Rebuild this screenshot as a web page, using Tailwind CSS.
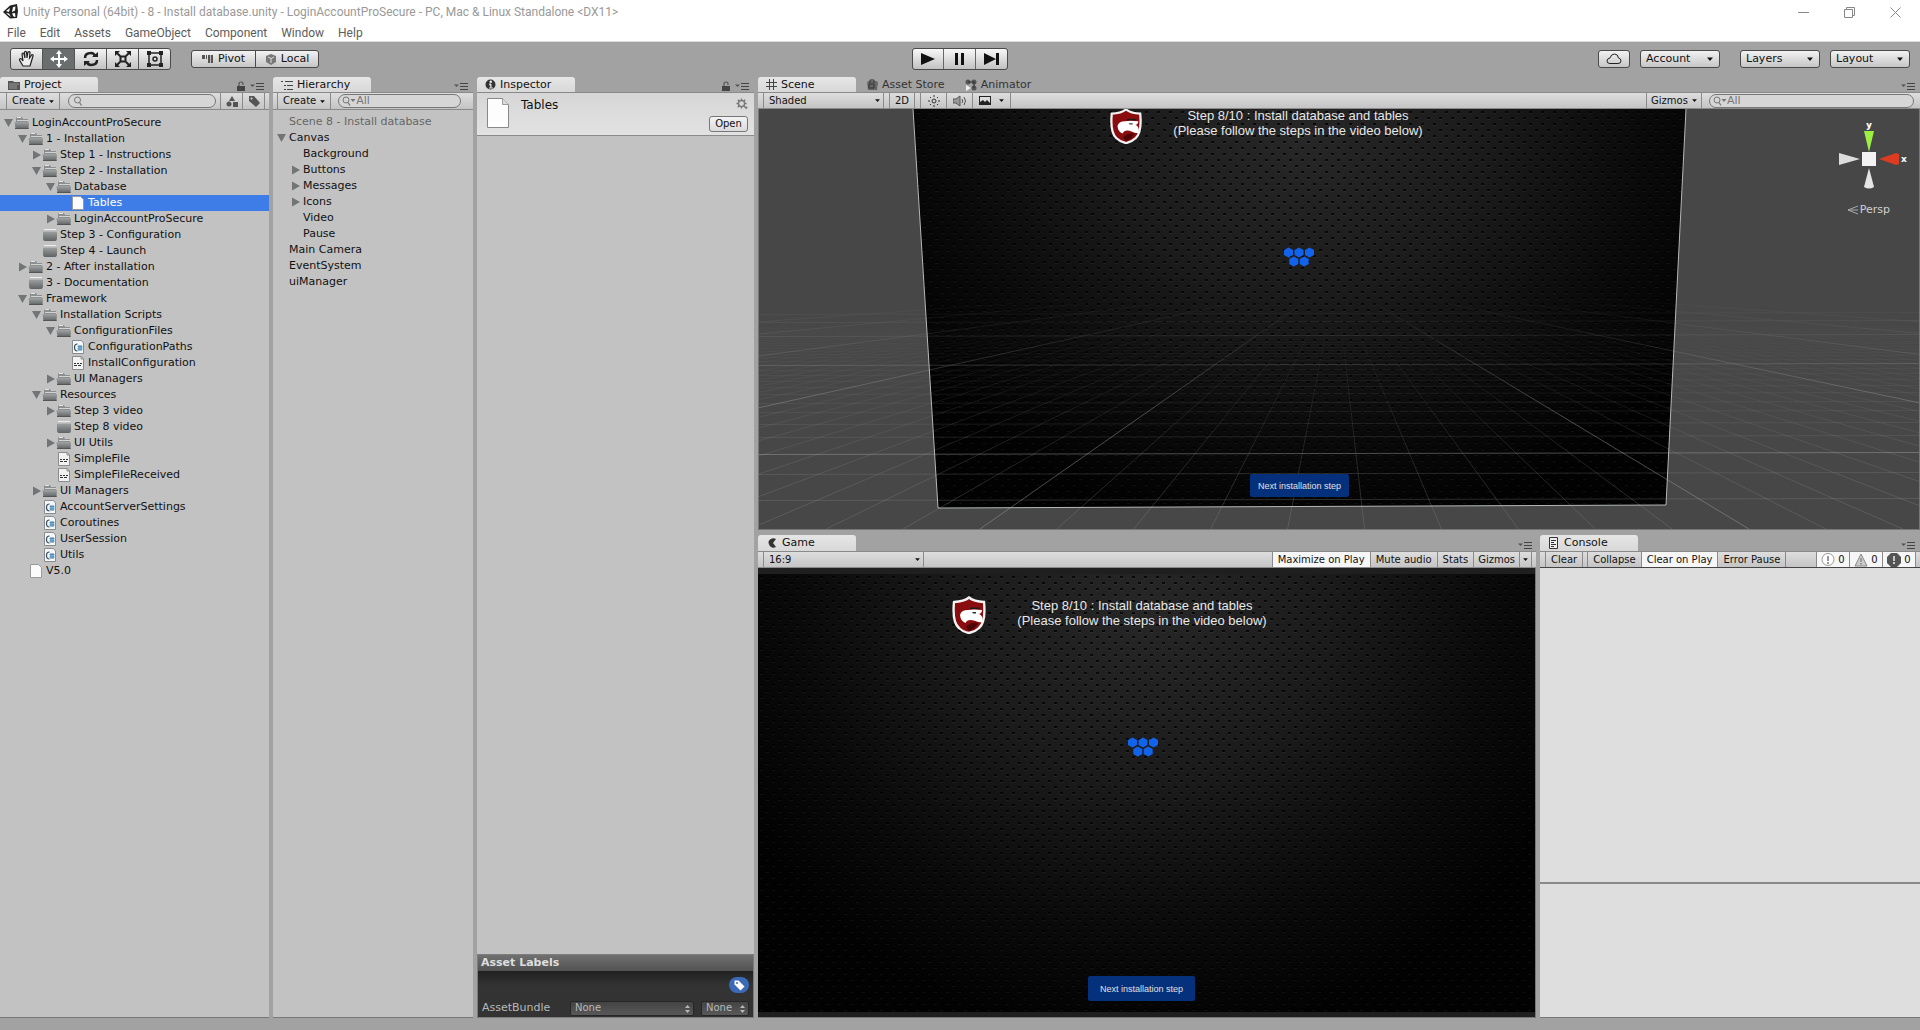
<!DOCTYPE html>
<html lang="en">
<head>
<meta charset="utf-8">
<title>Unity Personal (64bit) - 8 - Install database.unity</title>
<script src="https://cdn.jsdelivr.net/npm/@tailwindcss/browser@4"></script>
</head>
<body class="flex h-screen flex-col overflow-hidden bg-[#a2a2a2] font-['DejaVu_Sans',sans-serif] text-[11px] leading-4 text-[#111]">

<!-- Icon sheet -->
<svg class="absolute size-0" aria-hidden="true">
  <defs>
    <linearGradient id="fg" x1="0" y1="0" x2="0" y2="1"><stop offset="0" stop-color="#a0a4a4"/><stop offset="1" stop-color="#5e6262"/></linearGradient>
    <radialGradient id="glow" cx=".5" cy=".05" r=".62" gradientTransform="translate(.5 0) scale(.95 1.6) translate(-.5 0)"><stop offset="0" stop-color="#272727"/><stop offset=".4" stop-color="#1b1b1b"/><stop offset=".75" stop-color="#0a0a0a"/><stop offset="1" stop-color="#020202"/></radialGradient>
    <pattern id="dots" width="12" height="12" patternUnits="userSpaceOnUse"><path d="M2 2h3v2H2zM8 8h3v2H8z" fill="#000" fill-opacity=".75"/><path d="M2 4h3v1H2zM8 10h3v1H8z" fill="#fff" fill-opacity=".05"/></pattern>
    <linearGradient id="fadeMajor" gradientUnits="userSpaceOnUse" x1="0" y1="185" x2="0" y2="310"><stop offset="0" stop-color="#000"/><stop offset="1" stop-color="#fff"/></linearGradient>
    <linearGradient id="fadeMinor" gradientUnits="userSpaceOnUse" x1="0" y1="205" x2="0" y2="390"><stop offset="0" stop-color="#000"/><stop offset="1" stop-color="#fff"/></linearGradient>
    <mask id="mMajor" maskUnits="userSpaceOnUse" x="0" y="0" width="1160" height="420"><path d="M0 0h1160v420H0z" fill="url(#fadeMajor)"/></mask>
    <mask id="mMinor" maskUnits="userSpaceOnUse" x="0" y="0" width="1160" height="420"><path d="M0 0h1160v420H0z" fill="url(#fadeMinor)"/></mask>
  </defs>
  <symbol id="down" viewBox="0 0 10 10"><path d="M0 1h9L4.500 9z" fill="#717575"/></symbol>
  <symbol id="right" viewBox="0 0 10 10"><path d="M1 .5v9L9 5z" fill="#717575"/></symbol>
  <symbol id="folder" viewBox="0 0 16 16"><path d="M2 5V3l1-1h5l1 2h5v3H2z" fill="#8b8f8f"/><path d="M3 2.500h4" stroke="#e4e4e4"/><path d="M3 5.500h11" stroke="#d2d4d4"/><path d="M.5 7H15l-.5 7h-13z" fill="url(#fg)"/><path d="M1 13.500h13.500" stroke="#555"/></symbol>
  <symbol id="box" viewBox="0 0 16 16"><path d="M2 2.500h12" stroke="#eee"/><path d="M1 4h14v7q0 3-2 3H3q-2 0-2-3z" fill="url(#fg)"/><path d="M1 4.500h14" stroke="#b4b7b7"/></symbol>
  <symbol id="page" viewBox="0 0 16 16"><path d="M2.500 1.500h8l3 3v10h-11z" fill="#fbfbfb" stroke="#9a9a9a"/></symbol>
  <symbol id="text" viewBox="0 0 16 16"><path d="M2.500 1.500h9l2 2.500v10.500h-11z" fill="#f2f2f2" stroke="#8a8d8d"/><path d="M11 1.500V4h2.500" fill="none" stroke="#8a8d8d"/><path d="M4 8.500h2m1 0h2m1 0h2M4 10.500h3m1 0h3" stroke="#333"/></symbol>
  <symbol id="cs" viewBox="0 0 16 16"><path d="M2.500 1.500h9l2 2.500v10.500h-11z" fill="#f4f7f9" stroke="#8a8d8d"/><path d="M7.500 5Q4.500 5 4.500 8.500T7.500 12" fill="none" stroke="#3b4a55" stroke-width="1.200"/><path d="M9 6v6m2-6v6M7.500 7.800h5M7.500 10h5" stroke="#2476a8" stroke-width=".9"/></symbol>
  <symbol id="menu" viewBox="0 0 15 9"><path d="M0 2.500h5L2.500 5z" fill="#555"/><path d="M6 1.500h8M6 4.500h8M6 7.500h8" stroke="#444"/></symbol>
  <symbol id="lock" viewBox="0 0 10 11"><path d="M1 5h8v5H1z" fill="#444"/><path d="M3 5V3q0-2 2-2t2 2v1" fill="none" stroke="#555" stroke-width="1.200"/></symbol>
  <symbol id="caret" viewBox="0 0 8 5"><path d="M0 .5h8L4 5z" fill="currentColor"/></symbol>
  <symbol id="mag" viewBox="0 0 14 10"><circle cx="4.500" cy="4" r="3" fill="none" stroke="#777"/><path d="M6.500 6.500l2 3" stroke="#777" stroke-width="1.300"/></symbol>
  <symbol id="magv" viewBox="0 0 14 10"><circle cx="4" cy="4" r="3" fill="none" stroke="#777"/><path d="M6 6.500l2 3" stroke="#777" stroke-width="1.300"/><path d="M8.500 3h5L11 6z" fill="#777"/></symbol>
  <symbol id="shield" viewBox="0 0 34 38"><path d="M17 1.500Q22 5.500 32 6q2 20-5 26-4 4-10 5Q11 36 7 32 0 26 2 6 12 5.500 17 1.500z" fill="#8b0c0e" stroke="#f4f4f4" stroke-width="2.400"/><path d="M8 19q1-5 8-5 5-1 14 0 0 3-3 4 4 1 3.500 8-3 1-7-1-8-3-10 2-5-2-5.500-8z" fill="#fff"/><path d="M18 11.500h10v1.500H18z" fill="#1c1c1c"/><path d="M20 16h4v1.500h-3z" fill="#333"/><path d="M14 31q4-5 12-4-3 6-9 8z" fill="#4b0505"/></symbol>
  <symbol id="hexes" viewBox="0 0 32 20"><path d="M1 3l4.500-2.500L10 3v5l-4.500 2.500L1 8zM11.500 3L16 .5 20.500 3v5L16 10.500 11.500 8zM22 3l4.500-2.500L31 3v5l-4.500 2.500L22 8zM6.300 12l4.500-2.500 4.500 2.500v5l-4.500 2.500L6.300 17zM16.700 12l4.500-2.500 4.500 2.500v5l-4.500 2.500-4.500-2.500z" fill="#1263ec"/></symbol>
</svg>

<header class="shrink-0 border-b border-[#dcdcdc] bg-white text-[12px]">
  <div class="flex h-6 items-center pl-[3px]">
    <svg class="size-4" viewBox="0 0 16 16"><path d="M0 8l7-6.500L14 0l1 7-1 7-7 .5z" fill="#222"/><path d="M3 7l4-3-1 4zM3 9l3 .5L8 13zM10 3l2.500-.5L12 6.500 9 8zM9 9.500l3-.5.5 4-2-.500z" fill="#fff"/></svg>
    <h1 class="ml-1 flex-1 font-[Roboto,sans-serif] whitespace-nowrap text-[#999]">Unity Personal (64bit) - 8 - Install database.unity - LoginAccountProSecure - PC, Mac &amp; Linux Standalone &lt;DX11&gt;</h1>
    <div class="flex gap-[35px] pr-[19px]">
      <button aria-label="Minimize"><svg class="size-[11px]" viewBox="0 0 11 11"><path d="M0 5.500h11" stroke="#888"/></svg></button>
      <button aria-label="Restore"><svg class="size-[11px]" viewBox="0 0 11 11" fill="none" stroke="#888"><path d="M.5 2.500h8v8h-8zM2.500 2.500v-2h8v8h-2"/></svg></button>
      <button aria-label="Close"><svg class="size-[11px]" viewBox="0 0 11 11"><path d="M.5.5l10 10m0-10l-10 10" stroke="#888"/></svg></button>
    </div>
  </div>
  <nav class="flex h-[17px] items-center gap-[14px] pl-[7px] font-[Roboto,sans-serif] text-[#5c5c5c]">
    <a href="#">File</a><a href="#">Edit</a><a href="#">Assets</a><a href="#">GameObject</a><a href="#">Component</a><a href="#">Window</a><a href="#">Help</a>
  </nav>
</header>

<!-- Main toolbar -->
<div class="grid h-[35px] shrink-0 grid-cols-[1fr_auto_1fr] items-center pb-[2px]">
  <div class="flex items-center gap-5 pl-2.5">
    <div class="flex h-[22px] divide-x divide-[#555] overflow-hidden rounded-[3px] border border-[#4a4a4a] bg-linear-to-b from-[#f4f4f4] to-[#c2c2c2]">
      <button class="flex w-8 items-center justify-center" aria-label="Hand"><svg class="size-[18px]" viewBox="0 0 18 18"><path d="M5 16L1.500 10q0-2 2-1L5 11 4 4q1-2 2 0l1 4-.5-6q1-1.500 2 0L9 8l1-6q1.500-1 2 .5L11.500 8 14 4.500q1.500 0 1 1.500L13.500 11 12 16z" fill="#eee" stroke="#222" stroke-width="1.200"/></svg></button>
      <button class="flex w-8 items-center justify-center bg-[#6a6e6e]" aria-label="Move"><svg class="size-[18px]" viewBox="0 0 18 18"><path d="M9 0l3 4h-2v4h4V6l4 3-4 3v-2h-4v4h2l-3 4-3-4h2v-4H4v2L0 9l4-3v2h4V4H6z" fill="#fff"/></svg></button>
      <button class="flex w-8 items-center justify-center" aria-label="Rotate"><svg class="size-4" viewBox="0 0 16 16" fill="none" stroke="#222" stroke-width="2.500"><path d="M2 7q0-5 6-5 3 0 4 3M14 9q0 5-6 5-3 0-4-3"/><path d="M9 6h6V1zM7 10H1v5z" fill="#222" stroke="none"/></svg></button>
      <button class="flex w-8 items-center justify-center" aria-label="Scale"><svg class="size-4" viewBox="0 0 16 16" fill="none" stroke="#222" stroke-width="2"><path d="M5.500 5.500h5v5h-5zM5 5L1 1m10 4l4-4M5 11l-4 4m10-4l4 4"/><path d="M0 0h5L0 5zM16 0h-5l5 5zM0 16h5l-5-5zM16 16h-5l5-5z" fill="#222" stroke="none"/></svg></button>
      <button class="flex w-[31px] items-center justify-center" aria-label="Rect"><svg class="size-[18px]" viewBox="0 0 18 18" fill="none" stroke="#222" stroke-width="1.500"><path d="M3 3h12v12H3z"/><circle cx="9" cy="9" r="2"/><path d="M1 1h4v4H1zM13 1h4v4h-4zM1 13h4v4H1zM13 13h4v4h-4z" fill="#222" stroke="none"/></svg></button>
    </div>
    <div class="flex h-[18px] divide-x divide-[#4a4a4a] overflow-hidden rounded-[3px] border border-[#4a4a4a] bg-linear-to-b from-[#f2f2f2] to-[#c6c6c6]">
      <button class="flex w-[64px] items-center justify-center gap-1"><svg class="h-2.5 w-3" viewBox="0 0 12 10"><path d="M0 1h3v4H0zM4 1h1v4H4zM6 1h5v8H6z" fill="#555"/><path d="M8.500 1v8" stroke="#bbb"/></svg>Pivot</button>
      <button class="flex w-[62px] items-center justify-center gap-1"><svg class="size-3" viewBox="0 0 12 12"><path d="M1 3l5-2 5 2v6l-5 3-5-3z" fill="#777"/><path d="M3 4l3 1.500L9 4M6 5.500V10" stroke="#ddd" fill="none"/></svg>Local</button>
    </div>
  </div>
  <div class="flex h-[22px] divide-x divide-[#666] overflow-hidden rounded-[3px] border border-[#4a4a4a] bg-linear-to-b from-[#f8f8f8] to-[#c2c2c2]">
    <button class="flex w-[31px] items-center justify-center" aria-label="Play"><svg class="size-3.5" viewBox="0 0 14 14"><path d="M0 1l14 6-14 6z" fill="#111"/></svg></button>
    <button class="flex w-8 items-center justify-center" aria-label="Pause"><svg class="size-3.5" viewBox="0 0 14 14"><path d="M2 1h3v12H2zM8 1h3v12H8z" fill="#111"/></svg></button>
    <button class="flex w-[31px] items-center justify-center" aria-label="Step"><svg class="h-3.5 w-4" viewBox="0 0 16 14"><path d="M0 1l12 6-12 6zM12 1h3v12h-3z" fill="#111"/></svg></button>
  </div>
  <div class="flex items-center justify-end gap-2.5 pr-2.5">
    <button class="flex h-[18px] w-8 items-center justify-center rounded-[3px] border border-[#4a4a4a] bg-linear-to-b from-[#f2f2f2] to-[#c6c6c6]" aria-label="Cloud"><svg class="h-3 w-4" viewBox="0 0 16 12"><path d="M4 10.500q-3 0-3-2.500t3-3q1-4 4.500-4t4 4q2.500.5 2.500 3t-3 2.500z" fill="none" stroke="#222"/></svg></button>
    <label class="relative mr-2.5"><select aria-label="Account" class="block h-[18px] w-20 appearance-none rounded-[3px] border border-[#4a4a4a] bg-linear-to-b from-[#f2f2f2] to-[#c6c6c6] px-[5px]"><option>Account</option></select><svg class="absolute top-[7px] right-[7px] h-1 w-1.5"><use href="#caret"/></svg></label>
    <label class="relative"><select aria-label="Layers" class="block h-[18px] w-20 appearance-none rounded-[3px] border border-[#4a4a4a] bg-linear-to-b from-[#f2f2f2] to-[#c6c6c6] px-[5px]"><option>Layers</option></select><svg class="absolute top-[7px] right-[7px] h-1 w-1.5"><use href="#caret"/></svg></label>
    <label class="relative"><select aria-label="Layout" class="block h-[18px] w-20 appearance-none rounded-[3px] border border-[#4a4a4a] bg-linear-to-b from-[#f2f2f2] to-[#c6c6c6] px-[5px]"><option>Layout</option></select><svg class="absolute top-[7px] right-[7px] h-1 w-1.5"><use href="#caret"/></svg></label>
  </div>
</div>

<main class="flex min-h-0 flex-1 gap-1">

  <!-- Project -->
  <section class="flex w-[269px] shrink-0 flex-col">
    <div class="flex h-[15px] items-center">
      <h2 class="flex h-full w-[98px] items-center gap-1 rounded-t-[3px] bg-linear-to-b from-[#e6e6e6] to-[#d8d8d8] pl-2"><svg class="size-3" viewBox="0 0 12 12"><path d="M0 2h5l1 1h6v8H0z" fill="#555"/><path d="M1 5h10M2 6v4m2-4v4m2-4v4m2-4v4" stroke="#999"/></svg>Project</h2>
      <svg class="mt-1 ml-auto h-[11px] w-2.5"><use href="#lock"/></svg>
      <svg class="mt-1 mr-1 ml-1 h-[9px] w-[15px]"><use href="#menu"/></svg>
    </div>
    <div class="flex h-[18px] items-center border-y border-[#8a8a8a] bg-linear-to-b from-[#dedede] to-[#c4c4c4] pl-1.5 text-[10px]">
      <button class="flex h-full items-center gap-1 border-x border-[#8a8a8a] px-[5px]">Create<svg class="h-[3px] w-[5px]"><use href="#caret"/></svg></button>
      <label class="ml-2 flex h-[14px] flex-1 items-center rounded-full border border-[#777] bg-[#d6d6d6] pl-1"><svg class="h-2.5 w-3.5"><use href="#mag"/></svg><input aria-label="Search project" class="w-0 flex-1 outline-none"></label>
      <button class="ml-1 flex h-full w-[22px] items-center justify-center border-l border-[#8a8a8a]" aria-label="Filter by type"><svg class="size-3" viewBox="0 0 12 12"><path d="M6 1l3 5H3zM7 7h5v5H7z" fill="#555"/><circle cx="3" cy="9" r="2.500" fill="#555"/></svg></button>
      <button class="mr-1 flex h-full w-[23px] items-center justify-center border-x border-[#8a8a8a]" aria-label="Filter by label"><svg class="size-3" viewBox="0 0 12 12"><path d="M1 1h5l6 7-4 4-7-6z" fill="#555"/><circle cx="3.500" cy="3.500" r="1" fill="#ddd"/></svg></button>
    </div>
    <ul class="flex-1 border-b border-[#777] bg-[#c2c2c2] pt-[5px] whitespace-nowrap">
      <li class="flex h-4 items-center pl-1"><svg class="size-2.5"><use href="#down"/></svg><svg class="mr-0.5 size-4"><use href="#folder"/></svg>LoginAccountProSecure</li>
      <li class="flex h-4 items-center pl-[18px]"><svg class="size-2.5"><use href="#down"/></svg><svg class="mr-0.5 size-4"><use href="#folder"/></svg>1 - Installation</li>
      <li class="flex h-4 items-center pl-8"><svg class="size-2.5"><use href="#right"/></svg><svg class="mr-0.5 size-4"><use href="#folder"/></svg>Step 1 - Instructions</li>
      <li class="flex h-4 items-center pl-8"><svg class="size-2.5"><use href="#down"/></svg><svg class="mr-0.5 size-4"><use href="#folder"/></svg>Step 2 - Installation</li>
      <li class="flex h-4 items-center pl-[46px]"><svg class="size-2.5"><use href="#down"/></svg><svg class="mr-0.5 size-4"><use href="#folder"/></svg>Database</li>
      <li class="flex h-4 items-center bg-[#3e7de7] pl-[70px] text-white"><svg class="mr-0.5 size-4"><use href="#page"/></svg>Tables</li>
      <li class="flex h-4 items-center pl-[46px]"><svg class="size-2.5"><use href="#right"/></svg><svg class="mr-0.5 size-4"><use href="#folder"/></svg>LoginAccountProSecure</li>
      <li class="flex h-4 items-center pl-[42px]"><svg class="mr-0.5 size-4"><use href="#box"/></svg>Step 3 - Configuration</li>
      <li class="flex h-4 items-center pl-[42px]"><svg class="mr-0.5 size-4"><use href="#box"/></svg>Step 4 - Launch</li>
      <li class="flex h-4 items-center pl-[18px]"><svg class="size-2.5"><use href="#right"/></svg><svg class="mr-0.5 size-4"><use href="#folder"/></svg>2 - After installation</li>
      <li class="flex h-4 items-center pl-7"><svg class="mr-0.5 size-4"><use href="#box"/></svg>3 - Documentation</li>
      <li class="flex h-4 items-center pl-[18px]"><svg class="size-2.5"><use href="#down"/></svg><svg class="mr-0.5 size-4"><use href="#folder"/></svg>Framework</li>
      <li class="flex h-4 items-center pl-8"><svg class="size-2.5"><use href="#down"/></svg><svg class="mr-0.5 size-4"><use href="#folder"/></svg>Installation Scripts</li>
      <li class="flex h-4 items-center pl-[46px]"><svg class="size-2.5"><use href="#down"/></svg><svg class="mr-0.5 size-4"><use href="#folder"/></svg>ConfigurationFiles</li>
      <li class="flex h-4 items-center pl-[70px]"><svg class="mr-0.5 size-4"><use href="#cs"/></svg>ConfigurationPaths</li>
      <li class="flex h-4 items-center pl-[70px]"><svg class="mr-0.5 size-4"><use href="#text"/></svg>InstallConfiguration</li>
      <li class="flex h-4 items-center pl-[46px]"><svg class="size-2.5"><use href="#right"/></svg><svg class="mr-0.5 size-4"><use href="#folder"/></svg>UI Managers</li>
      <li class="flex h-4 items-center pl-8"><svg class="size-2.5"><use href="#down"/></svg><svg class="mr-0.5 size-4"><use href="#folder"/></svg>Resources</li>
      <li class="flex h-4 items-center pl-[46px]"><svg class="size-2.5"><use href="#right"/></svg><svg class="mr-0.5 size-4"><use href="#folder"/></svg>Step 3 video</li>
      <li class="flex h-4 items-center pl-14"><svg class="mr-0.5 size-4"><use href="#box"/></svg>Step 8 video</li>
      <li class="flex h-4 items-center pl-[46px]"><svg class="size-2.5"><use href="#right"/></svg><svg class="mr-0.5 size-4"><use href="#folder"/></svg>UI Utils</li>
      <li class="flex h-4 items-center pl-14"><svg class="mr-0.5 size-4"><use href="#text"/></svg>SimpleFile</li>
      <li class="flex h-4 items-center pl-14"><svg class="mr-0.5 size-4"><use href="#text"/></svg>SimpleFileReceived</li>
      <li class="flex h-4 items-center pl-8"><svg class="size-2.5"><use href="#right"/></svg><svg class="mr-0.5 size-4"><use href="#folder"/></svg>UI Managers</li>
      <li class="flex h-4 items-center pl-[42px]"><svg class="mr-0.5 size-4"><use href="#cs"/></svg>AccountServerSettings</li>
      <li class="flex h-4 items-center pl-[42px]"><svg class="mr-0.5 size-4"><use href="#cs"/></svg>Coroutines</li>
      <li class="flex h-4 items-center pl-[42px]"><svg class="mr-0.5 size-4"><use href="#cs"/></svg>UserSession</li>
      <li class="flex h-4 items-center pl-[42px]"><svg class="mr-0.5 size-4"><use href="#cs"/></svg>Utils</li>
      <li class="flex h-4 items-center pl-7"><svg class="mr-0.5 size-4"><use href="#page"/></svg>V5.0</li>
    </ul>
  </section>

  <!-- Hierarchy -->
  <section class="flex w-[200px] shrink-0 flex-col">
    <div class="flex h-[15px] items-center">
      <h2 class="flex h-full w-[98px] items-center gap-1 rounded-t-[3px] bg-linear-to-b from-[#e6e6e6] to-[#d8d8d8] pl-2"><svg class="h-2.5 w-3" viewBox="0 0 12 10"><path d="M0 1.500h2m2 0h8M3 5.500h2m1 0h6M3 9.500h2m1 0h6" stroke="#444"/></svg>Hierarchy</h2>
      <svg class="mt-1 mr-1 ml-auto h-[9px] w-[15px]"><use href="#menu"/></svg>
    </div>
    <div class="flex h-[18px] items-center border-y border-[#8a8a8a] bg-linear-to-b from-[#dedede] to-[#c4c4c4] pl-1 text-[10px]">
      <button class="flex h-full items-center gap-1 border-x border-[#8a8a8a] px-[5px]">Create<svg class="h-[3px] w-[5px]"><use href="#caret"/></svg></button>
      <label class="mr-3 ml-[7px] flex h-[14px] flex-1 items-center rounded-full border border-[#777] bg-[#d6d6d6] pl-[3px]"><svg class="h-2.5 w-3.5"><use href="#magv"/></svg><input aria-label="Search hierarchy" placeholder="All" class="w-0 flex-1 text-[11px] outline-none placeholder:text-[#777]"></label>
    </div>
    <ul class="flex-1 border-b border-[#777] bg-[#c2c2c2] pt-1 whitespace-nowrap">
      <li class="h-4 pl-4 text-[#666]">Scene 8 - Install database</li>
      <li class="flex h-4 items-center gap-0.5 pl-1"><svg class="size-2.5"><use href="#down"/></svg>Canvas</li>
      <li class="h-4 pl-[30px]">Background</li>
      <li class="flex h-4 items-center gap-0.5 pl-[18px]"><svg class="size-2.5"><use href="#right"/></svg>Buttons</li>
      <li class="flex h-4 items-center gap-0.5 pl-[18px]"><svg class="size-2.5"><use href="#right"/></svg>Messages</li>
      <li class="flex h-4 items-center gap-0.5 pl-[18px]"><svg class="size-2.5"><use href="#right"/></svg>Icons</li>
      <li class="h-4 pl-[30px]">Video</li>
      <li class="h-4 pl-[30px]">Pause</li>
      <li class="h-4 pl-4">Main Camera</li>
      <li class="h-4 pl-4">EventSystem</li>
      <li class="h-4 pl-4">uiManager</li>
    </ul>
  </section>

  <!-- Inspector -->
  <section class="flex w-[277px] shrink-0 flex-col">
    <div class="flex h-[15px] items-center">
      <h2 class="flex h-full w-[98px] items-center gap-1 rounded-t-[3px] bg-linear-to-b from-[#e6e6e6] to-[#d8d8d8] pl-2"><svg class="size-[11px]" viewBox="0 0 11 11"><circle cx="5.500" cy="5.500" r="5" fill="#333"/><path d="M4 5h2v4m-2 0h4M5 2h1.500v1.500H5z" stroke="#ddd" fill="#ddd"/></svg>Inspector</h2>
      <svg class="mt-1 ml-auto h-[11px] w-2.5"><use href="#lock"/></svg>
      <svg class="mt-1 mr-1 ml-1 h-[9px] w-[15px]"><use href="#menu"/></svg>
    </div>
    <div class="flex h-[44px] gap-3 border-y border-[#8a8a8a] bg-linear-to-b from-[#d6d6d6] to-[#e2e2e2] pt-[5px] pr-1.5 pl-2.5">
      <svg class="h-[30px] w-[22px]" viewBox="0 0 22 30"><path d="M.5.5h15l6 6v23H.5z" fill="#fdfdfd" stroke="#888"/><path d="M15.500.5v6h6" fill="#ddd" stroke="#999"/></svg>
      <h3 class="flex-1 text-[12px] leading-[14px]">Tables</h3>
      <div class="flex flex-col items-end gap-1.5">
        <button aria-label="Settings" class="h-3"><svg class="size-3" viewBox="0 0 13 12"><circle cx="6" cy="5.500" r="3.300" fill="none" stroke="#777" stroke-width="1.500"/><path d="M6 0v2m0 7v2M.5 5.500h2m7 0h2M2 1.500L3.500 3M8.500 8l1.500 1.500M10 1.500L8.500 3M3.500 8L2 9.500" stroke="#777" stroke-width="1.500"/><path d="M9 9h4l-2 3z" fill="#777"/></svg></button>
        <button class="h-4 w-[39px] rounded-[3px] border border-[#777] bg-linear-to-b from-[#f4f4f4] to-[#dadada] text-[10px] leading-[14px]">Open</button>
      </div>
    </div>
    <div class="flex-1 bg-[#c2c2c2]"></div>
    <div class="border border-[#7d7d7d]">
      <h3 class="h-[17px] border-b border-[#222] bg-linear-to-b from-[#707070] to-[#525252] pl-[3px] text-[11px] font-bold text-[#dedede]">Asset Labels</h3>
      <div class="flex h-[45px] flex-col justify-between bg-[#313131] bg-linear-to-b from-[#222] to-[#333] to-30% pt-[5px] pr-1 pb-px pl-1 text-[#b8b8b8]">
        <button aria-label="Labels" class="self-end"><svg class="h-4 w-5" viewBox="0 0 20 16"><rect width="20" height="16" rx="8" fill="#3a6ab8"/><path d="M5.500 3.500h4l6 6-4 4-6-6z" fill="#fff"/><circle cx="8" cy="6" r="1" fill="#3a6ab8"/></svg></button>
        <div class="flex items-center">
          <span class="w-[88px]">AssetBundle</span>
          <label class="relative flex-1"><select aria-label="Asset bundle" class="block h-[15px] w-full appearance-none rounded-[2px] border border-[#262626] bg-linear-to-b from-[#444] to-[#585858] px-1 text-[10px] leading-3"><option>None</option></select><svg class="absolute top-1 right-1 h-2 w-[5px]" viewBox="0 0 5 8"><path d="M0 3l2.500-3L5 3zM0 5h5L2.500 8z" fill="#b8b8b8"/></svg></label>
          <label class="relative ml-[7px]"><select aria-label="Variant" class="block h-[15px] w-[48px] appearance-none rounded-[2px] border border-[#262626] bg-linear-to-b from-[#444] to-[#585858] px-1 text-[10px] leading-3"><option>None</option></select><svg class="absolute top-1 right-1 h-2 w-[5px]" viewBox="0 0 5 8"><path d="M0 3l2.500-3L5 3zM0 5h5L2.500 8z" fill="#b8b8b8"/></svg></label>
        </div>
      </div>
    </div>
  </section>

  <div class="flex min-w-0 flex-1 flex-col gap-[5px]">

    <!-- Scene -->
    <section class="flex min-h-0 flex-[453] flex-col">
      <div class="flex h-[15px] items-center">
        <h2 class="flex h-full w-[98px] items-center gap-1 rounded-t-[3px] bg-linear-to-b from-[#e6e6e6] to-[#d8d8d8] pl-2"><svg class="size-[11px]" viewBox="0 0 11 11"><path d="M3.500 0v11m4-11v11M0 3.500h11m-11 4h11" stroke="#444"/></svg>Scene</h2>
        <a href="#" class="ml-[11px] flex items-center gap-1 text-[#333]"><svg class="size-[11px]" viewBox="0 0 11 11"><path d="M0 3l2-1h7l2 1-1 8H1z" fill="#666"/><path d="M3 4V1h4v3M2 5h5v4H2z" fill="none" stroke="#333"/></svg>Asset Store</a>
        <a href="#" class="ml-5 flex items-center gap-1 text-[#333]"><svg class="size-3" viewBox="0 0 12 12"><circle cx="3" cy="3" r="2.500" fill="#555"/><circle cx="9" cy="3" r="2.500" fill="#555"/><circle cx="9" cy="9" r="2.500" fill="#555"/><path d="M1 6l5 3-5 3z" fill="#eee"/><path d="M3 3h6v6" stroke="#333" fill="none"/></svg>Animator</a>
        <svg class="mt-1 mr-1 ml-auto h-[9px] w-[15px]"><use href="#menu"/></svg>
      </div>
      <div class="flex h-[17px] items-center border-y border-[#8a8a8a] bg-linear-to-b from-[#dedede] to-[#c4c4c4] pl-[5px] text-[10px]">
        <label class="relative h-full"><select aria-label="Draw mode" class="block h-full w-[121px] appearance-none border-x border-[#8a8a8a] px-[5px]"><option>Shaded</option></select><svg class="absolute top-1.5 right-1 h-[3px] w-[5px]"><use href="#caret"/></svg></label>
        <button class="ml-[5px] h-full w-[26px] border-x border-[#8a8a8a]">2D</button>
        <button class="ml-[5px] flex h-full w-[27px] items-center justify-center border-x border-[#8a8a8a]" aria-label="Lighting"><svg class="size-3" viewBox="0 0 12 12" fill="none" stroke="#333"><circle cx="6" cy="6" r="2"/><path d="M6 0v2m0 8v2M0 6h2m8 0h2M2 2l1 1m6 6l1 1M10 2L9 3M3 9l-1 1"/></svg></button>
        <button class="flex h-full w-[26px] items-center justify-center border-r border-[#8a8a8a]" aria-label="Audio"><svg class="h-3 w-3.5" viewBox="0 0 14 12"><path d="M0 4h3l4-3v10L3 8H0z" fill="#999" stroke="#555"/><path d="M9 4q1.500 2 0 4m2-6q3 4 0 8" fill="none" stroke="#555"/></svg></button>
        <button class="flex h-full w-[38px] items-center justify-center gap-2 border-r border-[#8a8a8a]" aria-label="Effects"><svg class="h-[9px] w-3" viewBox="0 0 12 9"><path d="M0 0h12v9H0z" fill="#222"/><path d="M1 1h10v6L8 4 6 6 4 4 1 6z" fill="#ddd"/></svg><svg class="h-[3px] w-[5px]"><use href="#caret"/></svg></button>
        <button class="ml-auto flex h-full w-14 items-center justify-center gap-1 border-x border-[#8a8a8a]">Gizmos<svg class="h-[3px] w-[5px]"><use href="#caret"/></svg></button>
        <label class="mr-1.5 ml-[7px] flex h-[14px] w-[205px] items-center rounded-full border border-[#777] bg-[#d6d6d6] pl-[3px]"><svg class="h-2.5 w-3.5"><use href="#magv"/></svg><input aria-label="Search scene" placeholder="All" class="w-0 flex-1 text-[11px] outline-none placeholder:text-[#777]"></label>
      </div>
      <div class="relative min-h-0 flex-1 overflow-hidden border-x border-b border-[#777] bg-[#474747]">
        <svg class="size-full" viewBox="0 0 1160 420" preserveAspectRatio="none">
          <path d="M154 0h773l-20 396-728 3z" fill="url(#glow)"/>
          <path d="M154 0h773l-20 396-728 3z" fill="url(#dots)"/>
          <g id="minor" stroke="#8c8c8c" stroke-opacity=".3" mask="url(#mMinor)"></g>
          <g id="major" stroke="#a4a4a4" stroke-opacity=".45" mask="url(#mMajor)"></g>
          <path d="M154 0l25 399 728-3L927 0" fill="none" stroke="#b4b8b8"/>
        </svg>
        <svg class="absolute -top-px left-[350px] h-9 w-[34px]"><use href="#shield"/></svg>
        <p class="absolute -top-px left-[539px] -translate-x-1/2 text-center font-['Liberation_Sans',sans-serif] text-[13px] leading-[15px] whitespace-nowrap text-[#e8e8e8]">Step 8/10 : Install database and tables<br>(Please follow the steps in the video below)</p>
        <svg class="absolute top-[138px] left-[524px] h-5 w-8"><use href="#hexes"/></svg>
        <button class="absolute top-[365px] left-[491px] h-[23px] w-[99px] rounded-[2px] bg-[#05307c] font-['Liberation_Sans',sans-serif] text-[9px] text-[#e0e0e0]">Next installation step</button>
        <svg class="absolute top-[14px] right-2.5 h-[74px] w-[70px]" viewBox="0 0 70 74"><path d="M25 8h10l-5 21z" fill="#9bf043"/><path d="M60 31l-3-1-17 6 17 6 3-1z" fill="#dd3c20"/><path d="M0 30l21 6-21 6z" fill="#ddd"/><path d="M30 45l-5 19q5 3 10 0z" fill="#e6e6e6"/><path d="M23 29h14v14H23z" fill="#f3f3f3"/><text x="30" y="5" text-anchor="middle" class="fill-white text-[10px] font-bold">y</text><text x="65" y="39" text-anchor="middle" class="fill-white text-[9px] font-bold">x</text></svg>
        <div class="absolute top-[93px] right-[29px] flex items-center gap-0.5 text-[#d0d0d0]"><svg class="h-2.5 w-[11px]" viewBox="0 0 11 10"><path d="M11 1L1 5l10 4M1 5h10" fill="none" stroke="#aaa"/></svg>Persp</div>
      </div>
    </section>

    <div class="flex min-h-0 flex-[483] gap-1">

      <!-- Game -->
      <section class="flex min-w-0 flex-1 flex-col">
        <div class="flex h-4 items-center">
          <h2 class="flex h-full w-[98px] items-center gap-1 rounded-t-[3px] bg-linear-to-b from-[#e6e6e6] to-[#d8d8d8] pl-2.5"><svg class="size-2.5" viewBox="0 0 10 10"><path d="M8 1Q6 0 4 .5 0 2 .5 5T4 9.500Q6 10 8 9L5 5z" fill="#333"/></svg>Game</h2>
          <svg class="mt-1 mr-[3px] ml-auto h-[9px] w-[15px]"><use href="#menu"/></svg>
        </div>
        <div class="flex h-[17px] items-center border-y border-[#8a8a8a] bg-linear-to-b from-[#dedede] to-[#c4c4c4] pl-[5px] text-[10px]">
          <label class="relative h-full"><select aria-label="Aspect" class="block h-full w-[161px] appearance-none border-x border-[#8a8a8a] px-[5px]"><option>16:9</option></select><svg class="absolute top-1.5 right-1 h-[3px] w-[5px]"><use href="#caret"/></svg></label>
          <button class="ml-auto h-full border-x border-[#8a8a8a] bg-[#f6f6f6] px-[5px]">Maximize on Play</button>
          <button class="h-full border-r border-[#8a8a8a] px-[5px]">Mute audio</button>
          <button class="h-full border-r border-[#8a8a8a] px-[5px]">Stats</button>
          <button class="h-full border-r border-[#8a8a8a] px-1">Gizmos</button>
          <button class="mr-1 flex h-full w-3 items-center justify-center border-r border-[#8a8a8a]" aria-label="Gizmo options"><svg class="h-[3px] w-[5px]"><use href="#caret"/></svg></button>
        </div>
        <div class="relative min-h-0 flex-1 overflow-hidden border-r border-b border-[#777] bg-[#1f1f1f] pt-1.5 pb-[5px]">
          <svg class="block size-full bg-black"><rect width="100%" height="100%" fill="url(#glow)"/><rect width="100%" height="100%" fill="url(#dots)"/></svg>
          <svg class="absolute top-7 left-1/4 h-[38px] w-[34px]"><use href="#shield"/></svg>
          <p class="absolute top-[30px] left-[384px] -translate-x-1/2 text-center font-['Liberation_Sans',sans-serif] text-[13px] leading-[15px] whitespace-nowrap text-[#e8e8e8]">Step 8/10 : Install database and tables<br>(Please follow the steps in the video below)</p>
          <svg class="absolute top-[169px] left-[369px] h-5 w-8"><use href="#hexes"/></svg>
          <button class="absolute bottom-4 left-[330px] h-[25px] w-[107px] rounded-[2px] bg-[#05307c] font-['Liberation_Sans',sans-serif] text-[9px] text-[#e0e0e0]">Next installation step</button>
        </div>
      </section>

      <!-- Console -->
      <section class="flex w-[380px] shrink-0 flex-col">
        <div class="flex h-4 items-center">
          <h2 class="flex h-full w-[98px] items-center gap-1 rounded-t-[3px] bg-linear-to-b from-[#e6e6e6] to-[#d8d8d8] pl-2"><svg class="size-3" viewBox="0 0 12 12"><path d="M1.500.5h8v11h-8z" fill="#eee" stroke="#333"/><path d="M3 3.500h5M3 5.500h3m-3 2h5m-5 2h3" stroke="#333"/></svg>Console</h2>
          <svg class="mt-1 mr-1 ml-auto h-[9px] w-[15px]"><use href="#menu"/></svg>
        </div>
        <div class="flex h-[17px] items-center border-y border-[#8a8a8a] border-b-[#444] bg-linear-to-b from-[#dedede] to-[#c4c4c4] pr-1 pl-[5px] text-[10px] whitespace-nowrap">
          <button class="h-full border-x border-[#8a8a8a] px-[5px]">Clear</button>
          <button class="ml-1 h-full border-x border-[#8a8a8a] px-[5px]">Collapse</button>
          <button class="h-full border-r border-[#8a8a8a] bg-[#f6f6f6] px-[5px]">Clear on Play</button>
          <button class="h-full border-r border-[#8a8a8a] px-[5px]">Error Pause</button>
          <button class="ml-auto flex h-full w-[34px] items-center justify-center gap-[3px] border-x border-[#8a8a8a] bg-[#f6f6f6]"><svg class="size-3.5" viewBox="0 0 14 14"><circle cx="7" cy="6.500" r="6" fill="#fff" stroke="#999"/><path d="M7 3v5m0 1v2" stroke="#777" stroke-width="1.500"/></svg>0</button>
          <button class="flex h-full w-[33px] items-center justify-center gap-[3px] border-r border-[#8a8a8a] bg-[#f6f6f6]"><svg class="size-3.5" viewBox="0 0 14 14"><path d="M7 1l6 12H1z" fill="#ccc" stroke="#888"/><path d="M7 5v4m0 1v1.500" stroke="#666"/></svg>0</button>
          <button class="flex h-full w-[33px] items-center justify-center gap-[3px] border-r border-[#8a8a8a] bg-[#f6f6f6]"><svg class="size-3.5" viewBox="0 0 14 14"><path d="M4 0h6l4 4v6l-4 4H4l-4-4V4z" fill="#555"/><path d="M7 3v5m0 1v2" stroke="#eee" stroke-width="1.500"/></svg>0</button>
        </div>
        <div class="flex-[316] border-b-2 border-[#8a8a8a] bg-[#dedede]"></div>
        <div class="flex-[134] border-b border-[#777] bg-[#dedede]"></div>
      </section>
    </div>
  </div>
</main>
<footer class="h-3 shrink-0"></footer>

<script>
  // Perspective floor grid: every tenth line is a major one.
  const ns = 'http://www.w3.org/2000/svg';
  const vx = 577, vy = 171;
  function line(major, x1, y1, x2, y2) {
    const l = document.createElementNS(ns, 'line');
    for (const [k, v] of Object.entries({ x1, y1, x2, y2 })) l.setAttribute(k, v);
    document.getElementById(major ? 'major' : 'minor').append(l);
  }
  for (let k = -2; k <= 40; k++) {
    const y = Math.round(vy + 1 / (0.00575 + 0.0006 * k)) + 0.5;
    if (k % 10 === 0 || k <= 25) line(k % 10 === 0, 0, y, 1160, y - 2);
  }
  for (let k = -40; k <= 50; k++) {
    line(k % 10 === 0, vx, vy, vx - 356 + 76.9 * k, vy + 249);
  }
</script>
</body>
</html>
